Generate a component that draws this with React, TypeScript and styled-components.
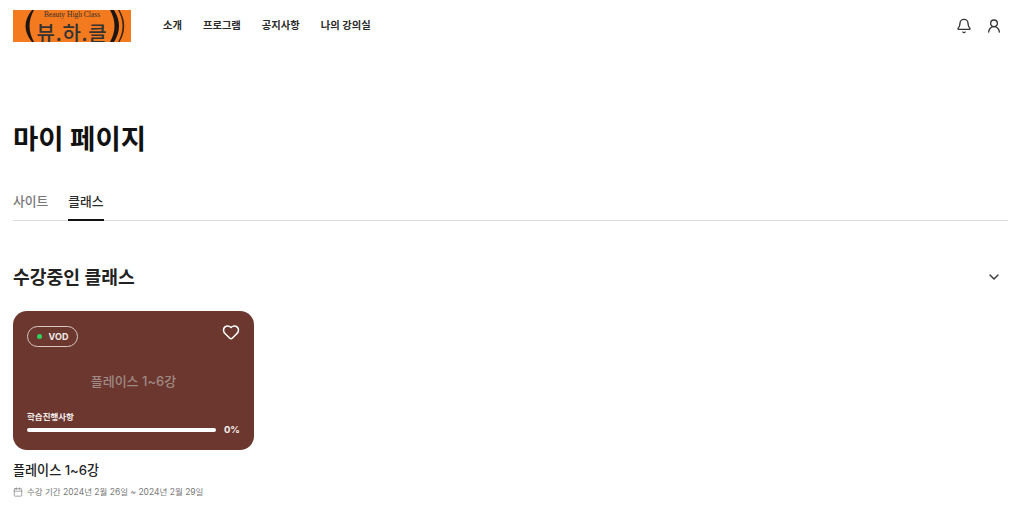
import React from 'react';
import styled, {createGlobalStyle} from 'styled-components';
import {Bell, Calendar, ChevronDown, Heart, UserRound} from 'lucide-react';

const GlobalStyle = createGlobalStyle`
  html, body {
    margin: 0;
    padding: 0;
    background: #fff;
    font-family: Inter, "Noto Sans CJK KR", sans-serif;
    color: #1b1b1b;
  }
  * { box-sizing: border-box; }
`;

const Page = styled.div`
  width: 1024px;
  height: 512px;
  overflow: hidden;
  padding: 0 16px 0 13px;
`;

const Header = styled.header`
  height: 51px;
  display: flex;
  align-items: center;
`;

const Logo = styled.div`
  position: relative;
  width: 118px;
  height: 32px;
  margin-top: 1px;
  background: #f47a20;
  flex-shrink: 0;
  clip-path: inset(0);
`;

const LogoArt = styled.svg`
  position: absolute;
  inset: 0;
`;

const LogoTagline = styled.span`
  position: absolute;
  top: -0.5px;
  left: 0;
  width: 100%;
  text-align: center;
  font-family: "Liberation Serif", serif;
  font-size: 7.5px;
  line-height: 9px;
  color: #3a3028;
`;

const LogoName = styled.span`
  position: absolute;
  top: 12px;
  left: 0;
  width: 100%;
  text-align: center;
  font-family: "Noto Sans CJK KR", sans-serif;
  font-size: 20px;
  line-height: 22px;
  font-weight: 500;
  letter-spacing: 0.8px;
  color: #333;
`;

const Nav = styled.nav`
  display: flex;
  gap: 21px;
  margin-left: 32px;
`;

const NavLink = styled.a`
  font-size: 10.3px;
  line-height: 15px;
  font-weight: 600;
  color: #2a2a2a;
`;

const HeaderIcons = styled.div`
  margin-left: auto;
  margin-right: 6px;
  display: flex;
  align-items: center;
  gap: 14px;
  color: #333;
`;

const Title = styled.h1`
  margin: 68px 0 0;
  font-size: 27.5px;
  line-height: 40px;
  font-weight: 700;
  color: #111;
`;

const Tabs = styled.div`
  margin-top: 22px;
  height: 40px;
  display: flex;
  gap: 20px;
  border-bottom: 1px solid #dedede;
`;

const Tab = styled.div<{$active?: boolean}>`
  height: 40px;
  padding-top: 11px;
  font-size: 12.8px;
  line-height: 20px;
  font-weight: 500;
  color: ${p => (p.$active ? '#2b2b2b' : '#777')};
  border-bottom: 2px solid ${p => (p.$active ? '#111' : 'transparent')};
`;

const SectionHead = styled.div`
  margin-top: 42px;
  height: 28px;
  display: flex;
  align-items: center;
  justify-content: space-between;
  padding-right: 6px;
`;

const SectionTitle = styled.h2`
  margin: 0;
  font-size: 18.2px;
  line-height: 28px;
  font-weight: 600;
  color: #222;
`;

const Card = styled.div`
  margin-top: 20px;
  width: 241px;
  height: 139px;
  border-radius: 14px;
  background: #6b372f;
  padding: 15px 14px 0;
  display: flex;
  flex-direction: column;
`;

const CardTop = styled.div`
  display: flex;
  justify-content: space-between;
  align-items: flex-start;
  color: #fff;
`;

const FavIcon = styled(Heart)`
  margin-top: -3px;
`;

const Badge = styled.div`
  width: 51px;
  height: 21px;
  border: 1px solid #d9c9c4;
  border-radius: 11px;
  display: flex;
  align-items: center;
  justify-content: center;
  gap: 7px;
  font-size: 9px;
  font-weight: 700;
  color: #f2ecea;
`;

const Dot = styled.span`
  width: 5px;
  height: 5px;
  border-radius: 50%;
  background: #2fd35c;
`;

const CardName = styled.div`
  margin-top: 24px;
  text-align: center;
  font-size: 13px;
  line-height: 20px;
  font-weight: 500;
  color: #a08a85;
`;

const ProgressLabel = styled.div`
  margin-top: 20px;
  font-size: 8.5px;
  line-height: 12px;
  font-weight: 700;
  color: #f5efed;
`;

const ProgressRow = styled.div`
  margin-top: 1px;
  display: flex;
  align-items: center;
  justify-content: space-between;
`;

const ProgressBar = styled.div`
  width: 189px;
  height: 4px;
  border-radius: 2px;
  background: #fff;
`;

const Percent = styled.span`
  font-size: 9.5px;
  line-height: 12px;
  font-weight: 700;
  color: #f5efed;
`;

const ClassName = styled.div`
  margin-top: 10px;
  font-size: 13.1px;
  line-height: 20px;
  font-weight: 500;
  color: #222;
`;

const Period = styled.div`
  margin-top: 5px;
  display: flex;
  align-items: center;
  gap: 4px;
  font-size: 8.5px;
  line-height: 14px;
  color: #777;
`;

const App = () => {
    return (
        <Page>
            <GlobalStyle />
            <Header>
                <Logo>
                    <LogoArt width="118" height="32" viewBox="0 0 118 32">
                        <path d="M21 0 Q12 16 21 32 L19 32 Q6 16 19 0 Z" fill="#1d1512" />
                        <path d="M97 0 Q106 16 97 32 L101 32 Q111 16 101 0 Z" fill="#1d1512" />
                        <path d="M105 0 Q114 16 105 32 L106.500 32 Q116 16 106.500 0 Z" fill="#3a2414" />
                    </LogoArt>
                    <LogoTagline>Beauty High Class</LogoTagline>
                    <LogoName>뷰.하.클</LogoName>
                </Logo>
                <Nav>
                    <NavLink>소개</NavLink>
                    <NavLink>프로그램</NavLink>
                    <NavLink>공지사항</NavLink>
                    <NavLink>나의 강의실</NavLink>
                </Nav>
                <HeaderIcons>
                    <Bell size={16} strokeWidth={2} />
                    <UserRound size={16} strokeWidth={2} />
                </HeaderIcons>
            </Header>
            <Title>마이 페이지</Title>
            <Tabs>
                <Tab>사이트</Tab>
                <Tab $active>클래스</Tab>
            </Tabs>
            <SectionHead>
                <SectionTitle>수강중인 클래스</SectionTitle>
                <ChevronDown size={16} strokeWidth={2} color="#333" />
            </SectionHead>
            <Card>
                <CardTop>
                    <Badge><Dot />VOD</Badge>
                    <FavIcon size={18} strokeWidth={2} />
                </CardTop>
                <CardName>플레이스 1~6강</CardName>
                <ProgressLabel>학습진행사항</ProgressLabel>
                <ProgressRow>
                    <ProgressBar />
                    <Percent>0%</Percent>
                </ProgressRow>
            </Card>
            <ClassName>플레이스 1~6강</ClassName>
            <Period>
                <Calendar size={10} strokeWidth={1.6} />
                수강 기간 2024년 2월 26일 ~ 2024년 2월 29일
            </Period>
        </Page>
    );
};

export default App;
